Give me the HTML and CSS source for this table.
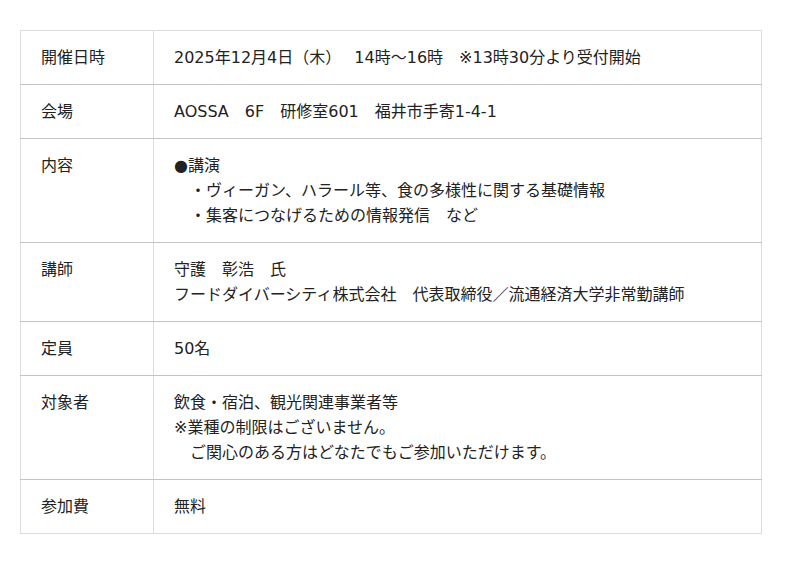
FILE: index.html
```html
<!DOCTYPE html>
<html lang="ja">
<head>
<meta charset="utf-8">
<link rel="stylesheet" href="styles.css">
</head>
<body>
<table class="info">
  <tr><th>開催日時</th><td>2025年12月4日（木）　 14時～16時　※13時30分より受付開始</td></tr>
  <tr><th>会場</th><td>AOSSA　6F　研修室601　福井市手寄1-4-1</td></tr>
  <tr><th>内容</th><td>●講演<br>　・ヴィーガン、ハラール等、食の多様性に関する基礎情報<br>　・集客につなげるための情報発信　など</td></tr>
  <tr><th>講師</th><td>守護　彰浩　氏<br>フードダイバーシティ株式会社　代表取締役／流通経済大学非常勤講師</td></tr>
  <tr><th>定員</th><td>50名</td></tr>
  <tr><th>対象者</th><td>飲食・宿泊、観光関連事業者等<br>※業種の制限はございません。<br>　ご関心のある方はどなたでもご参加いただけます。</td></tr>
  <tr><th>参加費</th><td>無料</td></tr>
</table>
</body>
</html>
```
FILE: styles.css
```css
html, body { margin: 0; background: #fff; }
body { padding: 30px 38px 0 20px; }
.info {
  width: 742px;
  border-collapse: collapse;
  font-family: "DejaVu Sans", "Noto Sans CJK JP", sans-serif;
  font-size: 16px;
  line-height: 25px;
  color: #222;
  border: 1px solid #dcdcdc;
}
.info th, .info td {
  text-align: left;
  vertical-align: top;
  font-weight: normal;
  padding: 14px 20px 14px 20px;
  border-bottom: 1px solid #c4c4c4;
}
.info tr:last-child th, .info tr:last-child td { border-bottom: 1px solid #dcdcdc; }
.info th { width: 92px; border-right: 1px solid #dcdcdc; }
```
